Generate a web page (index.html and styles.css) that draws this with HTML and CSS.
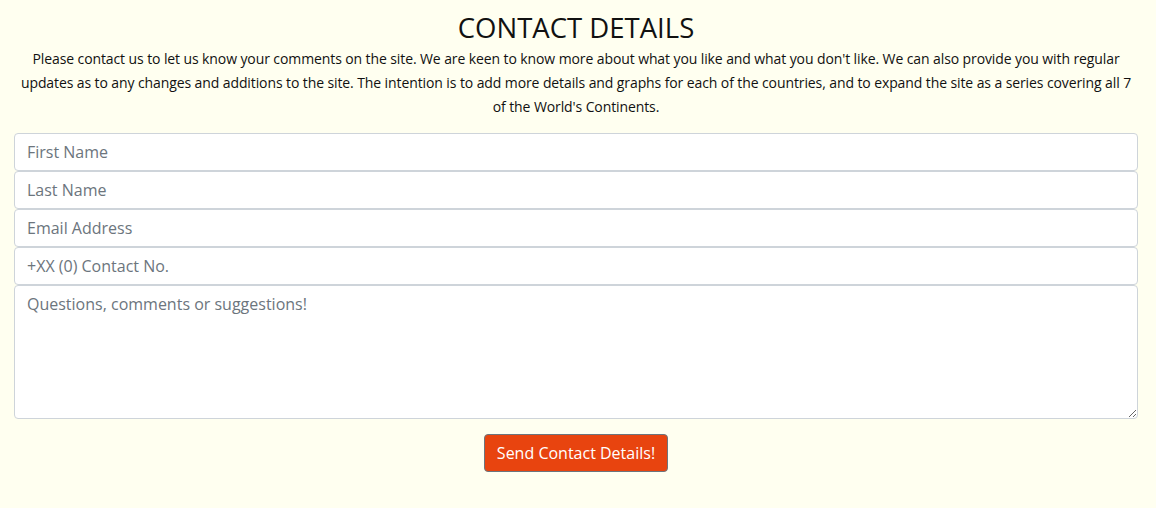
FILE: index.html
```html
<!DOCTYPE html>
<html lang="en">
<head>
<meta charset="utf-8">
<title>Contact Details</title>
<link rel="stylesheet" href="styles.css">
</head>
<body>
<main class="contact">
  <h2 class="contact-title">CONTACT DETAILS</h2>
  <p class="contact-intro">Please contact us to let us know your comments on the site. We are keen to know more about what you like and what you don't like. We can also provide you with regular updates as to any changes and additions to the site. The intention is to add more details and graphs for each of the countries, and to expand the site as a series covering all 7 of the World's Continents.</p>
  <form class="contact-form">
    <input class="field" type="text" placeholder="First Name">
    <input class="field" type="text" placeholder="Last Name">
    <input class="field" type="email" placeholder="Email Address">
    <input class="field" type="tel" placeholder="+XX (0) Contact No.">
    <textarea class="field field-area" placeholder="Questions, comments or suggestions!"></textarea>
    <div class="actions">
      <button class="send-btn" type="button">Send Contact Details!</button>
    </div>
  </form>
</main>
</body>
</html>
```

FILE: styles.css
```css
html, body {
  margin: 0;
  padding: 0;
  background: #fffff0;
}
body {
  font-family: "Open Sans", "Liberation Sans", sans-serif;
  color: #111;
}
.contact {
  padding: 10px 18px 0 14px;
}
.contact-title {
  margin: 0;
  text-align: center;
  font-size: 27.5px;
  font-weight: 400;
  line-height: 36px;
  color: #111;
}
.contact-intro {
  margin: 1px 0 14px;
  text-align: center;
  font-size: 14px;
  letter-spacing: -0.1px;
  line-height: 24px;
}
.contact-form {
  display: flex;
  flex-direction: column;
}
.field {
  display: block;
  box-sizing: border-box;
  width: 100%;
  height: 38px;
  margin: 0;
  padding: 6px 12px;
  font-family: inherit;
  font-size: 16px;
  line-height: 24px;
  color: #495057;
  background: #fff;
  border: 1px solid #ced4da;
  border-radius: 4px;
}
.field::placeholder {
  color: #6c757d;
  opacity: 1;
}
.field-area {
  height: 134px;
  resize: vertical;
}
.actions {
  display: flex;
  justify-content: center;
  padding-top: 15px;
}
.send-btn {
  height: 38px;
  padding: 0 12px;
  font-family: inherit;
  font-size: 16px;
  color: #fff;
  background: #e8440f;
  border: 1px solid #6c757d;
  border-radius: 4px;
}
```
